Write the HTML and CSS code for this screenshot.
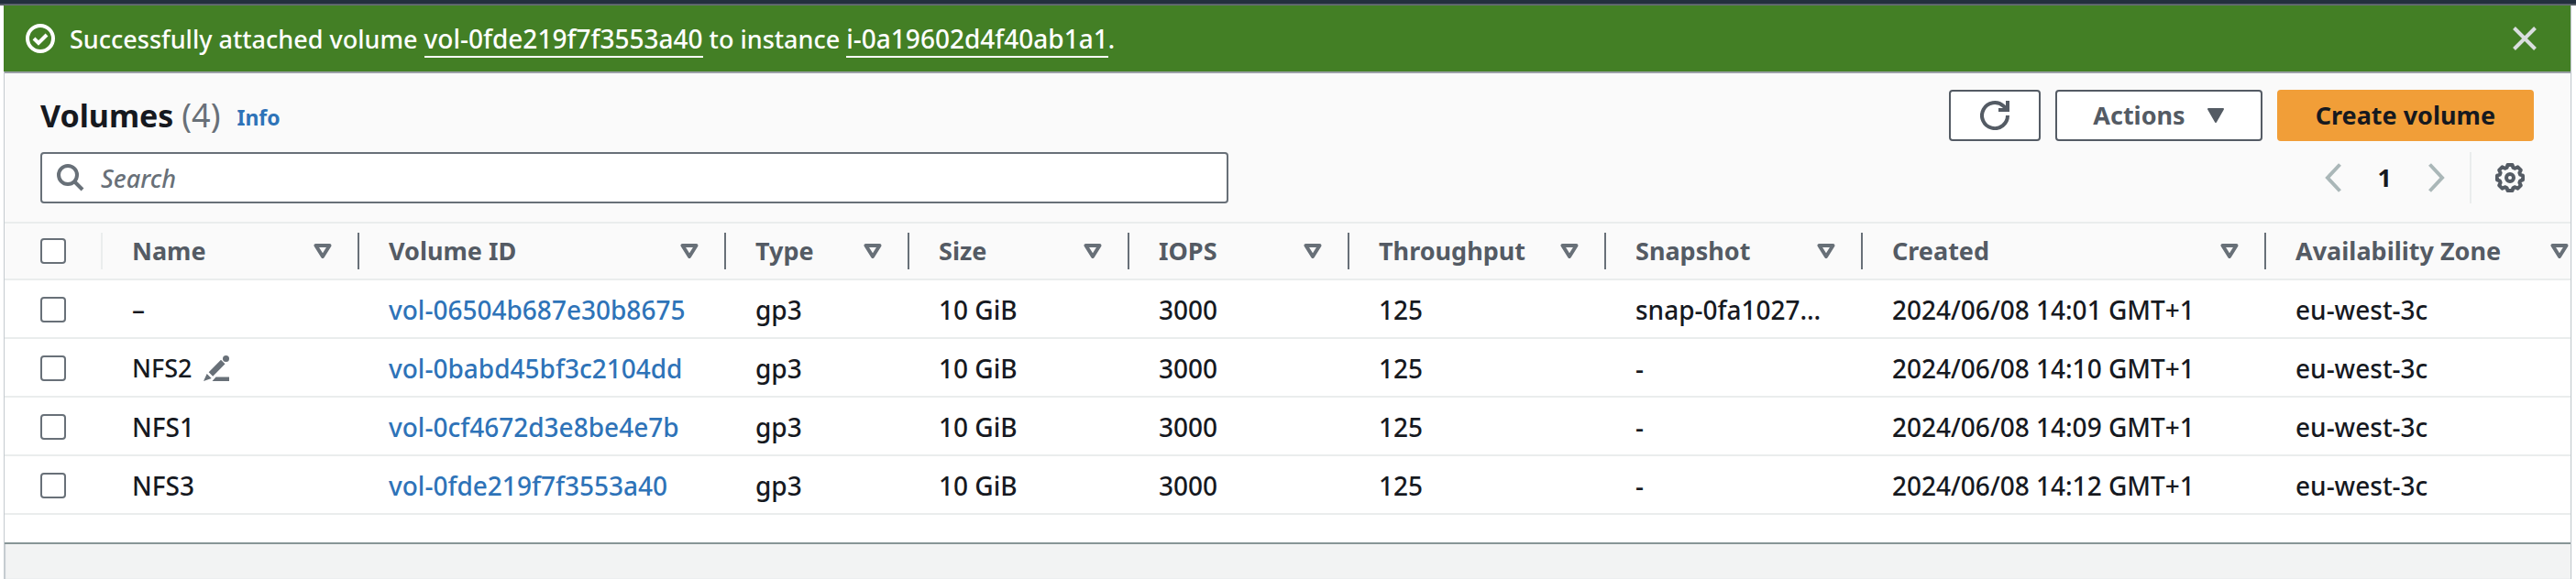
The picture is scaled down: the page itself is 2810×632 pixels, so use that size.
FILE: index.html
```html
<!DOCTYPE html>
<html lang="en">
<head>
<meta charset="utf-8">
<title>Volumes</title>
<link rel="stylesheet" href="styles.css">
</head>
<body>
<svg class="sprite" aria-hidden="true">
  <symbol id="i-sort" viewBox="0 0 20 16"><path d="M2.5 2h15L10 14z" fill="none" stroke="currentColor" stroke-width="4" stroke-linejoin="round"/></symbol>
</svg>
<div class="topbar"></div>
<div class="page">
  <div class="flash" role="status">
    <svg class="icon32" viewBox="0 0 32 32" fill="none" stroke="currentColor" stroke-width="4"><circle cx="16" cy="16" r="14"/><path d="M9 16l5 5 9-9"/></svg>
    <p class="flash-text">Successfully attached volume <a href="#">vol-0fde219f7f3553a40</a> to instance <a href="#">i-0a19602d4f40ab1a1</a>.</p>
    <button class="plain close" aria-label="Dismiss"><svg class="icon26" viewBox="0 0 26 26" fill="none" stroke="currentColor" stroke-width="4"><path d="M1.500 1.500l23 23M24.500 1.500l-23 23"/></svg></button>
  </div>
  <main class="panel">
    <header class="head">
      <div class="row">
        <h1>Volumes <span class="count">(4)</span></h1>
        <a class="info" href="#">Info</a>
        <div class="actions">
          <button class="btn refresh" aria-label="Refresh"><svg class="icon32" viewBox="0 0 32 32" fill="none" stroke="currentColor" stroke-width="4"><path d="M30 16a14 14 0 1 1-4.500-10.200L30 10M30 0v10H20"/></svg></button>
          <button class="btn menu">Actions <svg class="caret" viewBox="0 0 20 16"><path d="M2 1h16L10 15z" fill="currentColor" stroke="currentColor" stroke-width="2" stroke-linejoin="round"/></svg></button>
          <button class="btn primary">Create volume</button>
        </div>
      </div>
      <div class="row tools">
        <div class="search">
          <svg class="icon30" viewBox="0 0 30 30" fill="none" stroke="currentColor" stroke-width="4"><circle cx="12" cy="12" r="10"/><path d="M19 19l9 9"/></svg>
          <input type="text" placeholder="Search" aria-label="Search">
        </div>
        <nav class="pager" aria-label="Pagination">
          <button class="plain arrow" aria-label="Previous page"><svg class="chev" viewBox="0 0 18 32" fill="none" stroke="currentColor" stroke-width="4"><path d="M16.500 1.500L3 16l13.500 14.500"/></svg></button>
          <button class="plain num">1</button>
          <button class="plain arrow" aria-label="Next page"><svg class="chev" viewBox="0 0 18 32" fill="none" stroke="currentColor" stroke-width="4"><path d="M1.500 1.500L15 16 1.500 30.500"/></svg></button>
        </nav>
        <button class="plain gear" aria-label="Preferences"><svg class="icon32" viewBox="0 0 32 32" fill="none" stroke="currentColor" stroke-width="4" stroke-linejoin="round"><path d="M13.500 2h5l1 3 2 .8 3-1.400 3.300 3.300-1.400 3 .8 2 2.800 1v4.600l-2.800 1-.8 2 1.400 3-3.300 3.300-3-1.400-2 .8-1 3h-5l-1-3-2-.8-3 1.400-3.300-3.300 1.400-3-.8-2-2.800-1v-4.600l2.800-1 .8-2-1.400-3 3.300-3.300 3 1.400 2-.8z"/><circle cx="16" cy="16" r="4"/></svg></button>
      </div>
    </header>
    <div class="scroll">
    <table>
      <colgroup><col class="w108"><col class="w280"><col class="w400"><col class="w200"><col class="w240"><col class="w240"><col class="w280"><col class="w280"><col class="w440"><col class="w360"></colgroup>
      <thead><tr>
        <th scope="col"><div class="hcell first"><input type="checkbox" aria-label="Select all"></div></th>
        <th scope="col"><div class="hcell">Name<svg class="sort"><use href="#i-sort"/></svg></div></th>
        <th scope="col"><div class="hcell">Volume ID<svg class="sort"><use href="#i-sort"/></svg></div></th>
        <th scope="col"><div class="hcell">Type<svg class="sort"><use href="#i-sort"/></svg></div></th>
        <th scope="col"><div class="hcell">Size<svg class="sort"><use href="#i-sort"/></svg></div></th>
        <th scope="col"><div class="hcell">IOPS<svg class="sort"><use href="#i-sort"/></svg></div></th>
        <th scope="col"><div class="hcell">Throughput<svg class="sort"><use href="#i-sort"/></svg></div></th>
        <th scope="col"><div class="hcell">Snapshot<svg class="sort"><use href="#i-sort"/></svg></div></th>
        <th scope="col"><div class="hcell">Created<svg class="sort"><use href="#i-sort"/></svg></div></th>
        <th scope="col"><div class="hcell">Availability Zone<svg class="sort"><use href="#i-sort"/></svg></div></th>
      </tr></thead>
      <tbody>
        <tr><td class="pick"><input type="checkbox" aria-label="Select vol-06504b687e30b8675"></td><td>–</td><td><a href="#">vol-06504b687e30b8675</a></td><td>gp3</td><td>10 GiB</td><td>3000</td><td>125</td><td>snap-0fa1027…</td><td>2024/06/08 14:01 GMT+1</td><td>eu-west-3c</td></tr>
        <tr><td class="pick"><input type="checkbox" aria-label="Select NFS2"></td><td><div class="name">NFS2<button class="plain edit" aria-label="Edit name"><svg class="pencil" viewBox="0 0 28 28" fill="currentColor"><path d="M0 28l3.700-8 5 5zM5.700 18.200L19 4.700l4.500 4.500L10.200 22.700zM13.500 23.500H28V28H9.500z"/><circle cx="24.500" cy="3.500" r="3.500"/></svg></button></div></td><td><a href="#">vol-0babd45bf3c2104dd</a></td><td>gp3</td><td>10 GiB</td><td>3000</td><td>125</td><td>-</td><td>2024/06/08 14:10 GMT+1</td><td>eu-west-3c</td></tr>
        <tr><td class="pick"><input type="checkbox" aria-label="Select NFS1"></td><td>NFS1</td><td><a href="#">vol-0cf4672d3e8be4e7b</a></td><td>gp3</td><td>10 GiB</td><td>3000</td><td>125</td><td>-</td><td>2024/06/08 14:09 GMT+1</td><td>eu-west-3c</td></tr>
        <tr><td class="pick"><input type="checkbox" aria-label="Select NFS3"></td><td>NFS3</td><td><a href="#">vol-0fde219f7f3553a40</a></td><td>gp3</td><td>10 GiB</td><td>3000</td><td>125</td><td>-</td><td>2024/06/08 14:12 GMT+1</td><td>eu-west-3c</td></tr>
      </tbody>
    </table>
    </div>
  </main>
</div>
</body>
</html>
```
FILE: styles.css
```css
* { box-sizing: border-box; }
html { height: 100%; }
body {
  margin: 0;
  min-height: 100%;
  display: flex;
  flex-direction: column;
  overflow: hidden;
  background: #fff;
  color: #16191f;
  font: 500 27px/40px "Noto Sans", sans-serif;
}
svg { display: block; flex: none; }
.sprite { position: absolute; width: 0; height: 0; }
.topbar { height: 6px; background: #232f3e; border-bottom: 2px solid #545b64; }
.page {
  flex: 1;
  margin: 0 6px 0 4px;
  background: #f2f3f3;
  box-shadow: inset 2px 0 1px #c4cacf, 1px 0 1px #c4cacf;
}
button, input { font: inherit; color: inherit; margin: 0; }
.plain { display: flex; border: 0; padding: 0; background: none; }
a { color: #2e73b8; text-decoration: none; }

.flash {
  display: flex;
  align-items: center;
  height: 72px;
  padding: 0 37px 0 24px;
  gap: 16px;
  background: #437f25;
  color: #fff;
}
.flash-text { margin: 0; flex: 1; }
.flash a { color: #fff; font-size: 28px; border-bottom: 2px solid #fff; }
.close { color: #dadedf; }
.icon32 { width: 32px; height: 32px; }
.icon30 { width: 30px; height: 30px; }
.icon26 { width: 26px; height: 26px; }

.panel {
  margin: 0 0 0 1px;
  background: #fff;
  border-top: 2px solid #9aa0a6;
  border-bottom: 2px solid #879596;
  padding-bottom: 30px;
}
.head {
  padding: 18px 40px 20px 39px;
  background: #fafafa;
  border-bottom: 2px solid #eaeded;
}
.row { display: flex; align-items: center; }
h1 { margin: 0; font-size: 34px; font-weight: 700; line-height: 44px; }
.count { font-size: 36px; font-weight: 400; color: #687078; }
.info { margin: 4px 0 0 18px; font-size: 23px; font-weight: 700; line-height: 32px; }
.actions { display: flex; gap: 16px; margin-left: auto; }
.btn {
  display: flex;
  align-items: center;
  justify-content: center;
  height: 56px;
  padding: 0 40px;
  border: 2px solid #545b64;
  border-radius: 4px;
  background: #fff;
  color: #545b64;
  font-weight: 700;
}
.refresh { width: 100px; padding: 0; }
.menu { gap: 23px; padding: 0 39px; }
.caret { width: 20px; height: 16px; }
.primary { background: #f19e38; border-color: #f19e38; color: #16191f; }
.tools { margin-top: 12px; }
.search {
  display: flex;
  align-items: center;
  flex: 0 1 1296px;
  height: 56px;
  padding-left: 16px;
  gap: 18px;
  border: 2px solid #687078;
  border-radius: 4px;
  background: #fff;
  color: #687078;
}
.search input { flex: 1; border: 0; outline: 0; padding: 2px 0 0; background: none; }
.search input::placeholder { color: #687078; opacity: 1; font-style: italic; }
.pager { display: flex; align-items: center; margin-left: auto; padding-right: 27px; gap: 40px; }
.arrow { color: #aab7b8; }
.chev { width: 18px; height: 32px; }
.num { font-weight: 700; }
.gear { height: 56px; align-items: center; padding: 0 10px 0 26px; border-left: 2px solid #eaeded; color: #545b64; }

.scroll { overflow: hidden; }
table { width: 2827px; table-layout: fixed; border-collapse: separate; border-spacing: 0; }
.w108 { width: 107px; } .w200 { width: 200px; } .w240 { width: 240px; } .w280 { width: 280px; }
.w360 { width: 360px; } .w400 { width: 400px; } .w440 { width: 440px; }
th { padding: 10px 0; background: #fafafa; border-bottom: 2px solid #eaeded; color: #545b64; text-align: left; font-weight: 700; }
.hcell {
  display: flex;
  align-items: center;
  justify-content: space-between;
  height: 40px;
  padding: 0 28px 0 32px;
  border-right: 2px solid #687078;
  white-space: nowrap;
}
.first { border-color: #eaeded; padding: 0 0 0 39px; }
.sort { width: 20px; height: 16px; color: #687078; }
td { height: 64px; padding: 2px 0 0 32px; border-bottom: 2px solid #eaeded; white-space: nowrap; font-size: 28px; }
.pick { padding-left: 39px; }
input[type="checkbox"] {
  appearance: none;
  display: block;
  width: 28px;
  height: 28px;
  border: 2px solid #687078;
  border-radius: 4px;
  background: #fff;
}
.name { display: flex; align-items: center; gap: 12px; font-size: 27px; }
.edit { color: #687078; }
.pencil { width: 28px; height: 28px; }
```
